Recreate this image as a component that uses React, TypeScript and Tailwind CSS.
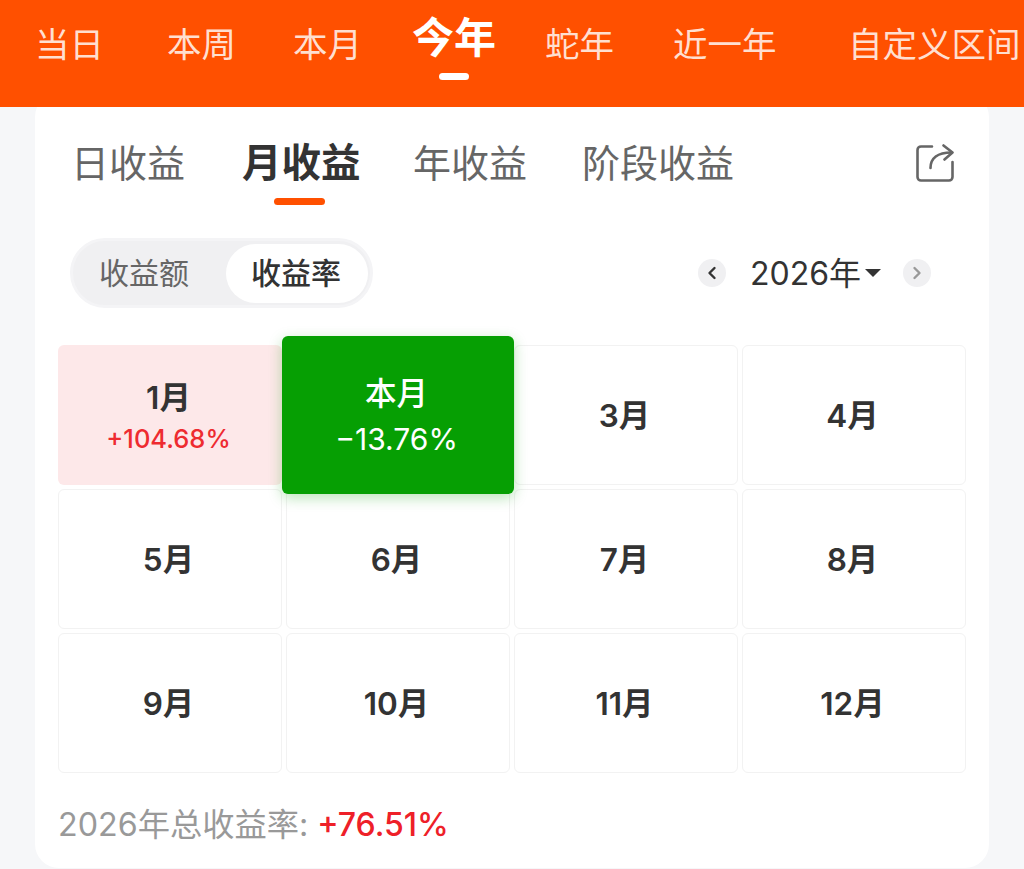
import React from 'react';

const periods = [
  { label: '当日', cls: 'ml-[35px]' },
  { label: '本周', cls: 'ml-[63px]' },
  { label: '本月', cls: 'ml-[57px]' },
  { label: '今年', cls: 'ml-[50px]', active: true },
  { label: '蛇年', cls: 'ml-[49px]' },
  { label: '近一年', cls: 'ml-[59px]' },
  { label: '自定义区间', cls: 'ml-[71.5px]' },
];

const months = [
  { label: '1月', value: '+104.68%', tone: 'up' },
  { label: '本月', value: '−13.76%', tone: 'down' },
  { label: '3月' }, { label: '4月' }, { label: '5月' }, { label: '6月' },
  { label: '7月' }, { label: '8月' }, { label: '9月' }, { label: '10月' },
  { label: '11月' }, { label: '12月' },
];

export default function App() {
  return (
    <div className="h-[869px] w-[1024px] overflow-hidden bg-[#f6f7f9] font-['Inter','Noto_Sans_CJK_SC',sans-serif]">
      {/* top period bar */}
      <div className="relative z-20 flex h-[107px] items-start whitespace-nowrap bg-[#ff5000]">
        {periods.map((p) =>
          p.active ? (
            <div key={p.label} className={`${p.cls} flex flex-col items-center pt-[12px]`}>
              <span className="text-[42px] font-bold leading-[52px] text-white">{p.label}</span>
              <span className="mt-[9px] h-[7px] w-[30px] rounded-full bg-white" />
            </div>
          ) : (
            <span key={p.label} className={`${p.cls} pt-[22px] text-[34.5px] leading-[46px] text-[#ffdfd0]`}>{p.label}</span>
          )
        )}
      </div>

      {/* card, its top corners tuck under the bar */}
      <div className="mx-[35px] -mt-[14px] h-[775px] rounded-[24px] bg-white px-[23px]">
        <div className="flex items-start pl-[13px] pr-[12px] pt-[45px]">
          <span className="text-[38px] leading-[50px] text-[#666666]">日收益</span>
          <div className="ml-[57px] flex flex-col items-start">
            <span className="text-[39.5px] font-bold leading-[50px] text-[#333333]">月收益</span>
            <span className="ml-[32px] mt-[10px] h-[7px] w-[51px] rounded-full bg-[#ff5000]" />
          </div>
          <span className="ml-[52.5px] text-[38px] leading-[50px] text-[#666666]">年收益</span>
          <span className="ml-[55px] text-[38px] leading-[50px] text-[#666666]">阶段收益</span>
          <svg className="ml-auto mt-[6px]" width="38" height="38" viewBox="0 0 38 38" fill="none" stroke="#666666" strokeWidth="2.6" strokeLinecap="round" strokeLinejoin="round">
            <path d="M16 2.500H5a3.500 3.500 0 0 0-3.500 3.500v27A3.500 3.500 0 0 0 5 36.500h28a3.500 3.500 0 0 0 3.500-3.500V18" />
            <path d="M14.500 24c0-10 7-15.500 21-15.500" />
            <path d="M27.500 1.500l9 7-8 7" />
          </svg>
        </div>

        <div className="mt-[33px] flex items-center justify-between pl-[12px] pr-[35px]">
          <div className="flex h-[70px] w-[303px] items-center rounded-full border-[3px] border-[#f4f4f6] bg-[#f0f0f2] pl-[26px] pr-[2px]">
            <span className="text-[30px] text-[#666666]">收益额</span>
            <span className="ml-[37px] flex h-[59px] w-[142px] items-center justify-center rounded-full bg-white pr-[2px] text-[30px] font-medium text-[#333333]">收益率</span>
          </div>
          <div className="flex items-center">
            <span className="flex h-[28px] w-[28px] items-center justify-center rounded-full bg-[#f0f0f2]">
              <svg width="10" height="14" viewBox="0 0 10 14" fill="none" stroke="#333333" strokeWidth="2.400" strokeLinecap="round" strokeLinejoin="round"><path d="M7.500 2L2.500 7l5 5" /></svg>
            </span>
            <span className="ml-[24px] pt-[2px] text-[32px] leading-[44px] text-[#333333]">2026年</span>
            <span className="ml-[4px] h-0 w-0 border-x-[8px] border-t-[8px] border-x-transparent border-t-[#333333]" />
            <span className="ml-[22px] flex h-[28px] w-[28px] items-center justify-center rounded-full bg-[#f0f0f2]">
              <svg width="10" height="14" viewBox="0 0 10 14" fill="none" stroke="#999999" strokeWidth="2.400" strokeLinecap="round" strokeLinejoin="round"><path d="M2.500 2l5 5-5 5" /></svg>
            </span>
          </div>
        </div>

        <div className="mt-[37px] grid grid-cols-4 grid-rows-[repeat(3,140px)] gap-[4px]">
          {months.map((m) => {
            if (m.tone === 'down') {
              return (
                <div key={m.label} className="relative z-10 -mx-[4px] -my-[9px] flex flex-col items-center justify-center rounded-[6px] bg-[#069f03] pr-[3px] pt-[2px] text-white shadow-[0_4px_14px_rgba(6,159,3,0.28)]">
                  <span className="text-[31.5px] font-medium leading-[40px]">{m.label}</span>
                  <span className="mt-[5px] text-[30px] leading-[40px]">{m.value}</span>
                </div>
              );
            }
            if (m.tone === 'up') {
              return (
                <div key={m.label} className="flex flex-col items-center justify-center rounded-[6px] bg-[#fde8e9] pr-[3px] pt-[3px]">
                  <span className="text-[31.5px] font-semibold leading-[40px] text-[#333333]">{m.label}</span>
                  <span className="mt-[4px] text-[25.5px] font-medium leading-[34px] text-[#ee2b30]">{m.value}</span>
                </div>
              );
            }
            return (
              <div key={m.label} className="flex items-center justify-center rounded-[6px] border border-[#f2f2f2] bg-white pr-[3px] pt-[2px] text-[31.5px] font-semibold text-[#333333]">
                {m.label}
              </div>
            );
          })}
        </div>

        <div className="mt-[30px] flex items-center whitespace-nowrap">
          <span className="text-[32.25px] leading-[44px] text-[#999999]">2026年总收益率:</span>
          <span className="ml-[9px] text-[32px] font-medium leading-[44px] text-[#ee2028]">+76.51%</span>
        </div>
      </div>
    </div>
  );
}
